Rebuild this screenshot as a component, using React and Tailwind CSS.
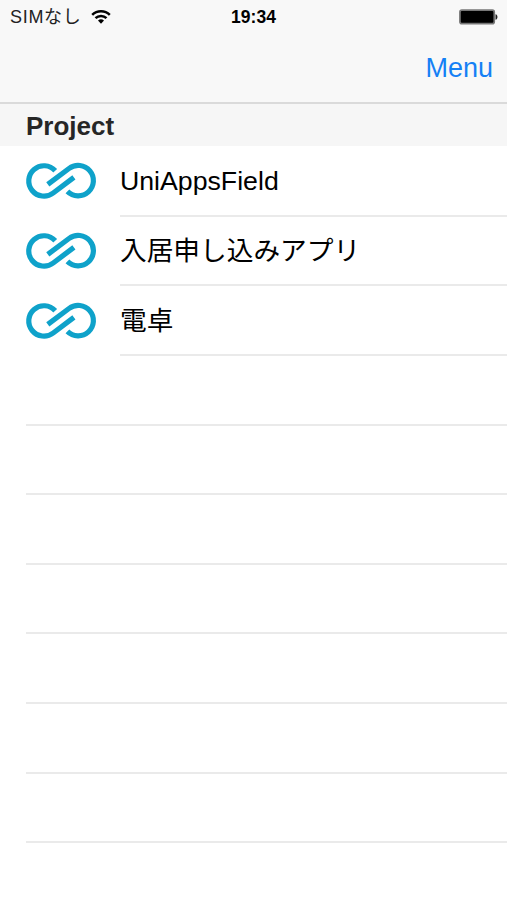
const PROJECTS = ['UniAppsField', '入居申し込みアプリ', '電卓']
const EMPTY_ROWS = 7

function WifiIcon() {
  return (
    <svg className="ml-[9px] h-[16px] w-[20px] shrink-0" viewBox="0 0 20 16" fill="none" stroke="#000" strokeWidth="2.5">
      <path d="M1.2 5.9a12.4 12.4 0 0 1 17.6 0" />
      <path d="M4.5 9.2a7.8 7.8 0 0 1 11 0" />
      <path d="M10 14.8l-3-3.2a4.4 4.4 0 0 1 6 0z" fill="#000" stroke="none" />
    </svg>
  )
}

function BatteryIcon() {
  return (
    <svg className="h-[16px] w-[40px]" viewBox="0 0 40 16">
      <rect x="0.7" y="0.9" width="34.8" height="14" rx="2.2" fill="#777" stroke="#777" strokeWidth="1.2" />
      <rect x="1.8" y="2" width="32.6" height="11.8" rx="1" fill="#000" />
      <path d="M36.5 5.2c2.6.5 2.6 5 0 5.5z" fill="#222" />
    </svg>
  )
}

function LoopLogo() {
  return (
    <svg className="h-[38px] w-[72px] shrink-0" viewBox="0 0 72 38" fill="none" stroke="#0fa2ca" strokeWidth="5.2">
      <path d="M30.2 8.7A15.2 15.2 0 1 0 28.2 31L48.9 15.4" />
      <path d="M22.8 22.4L44 6.5A15.2 15.2 0 1 1 42.4 29.3" />
    </svg>
  )
}

function StatusBar() {
  return (
    <div className="grid h-[34px] grid-cols-3 items-center">
      <div className="flex items-center pl-[10px] text-[18px] text-[#222]">
        <span className="whitespace-nowrap tracking-[0.7px]">SIMなし</span>
        <WifiIcon />
      </div>
      <div className="pt-px text-center text-[17.5px] font-bold">19:34</div>
      <div className="flex justify-end pr-[8px]">
        <BatteryIcon />
      </div>
    </div>
  )
}

export default function App() {
  return (
    <div className="flex h-[900px] w-[507px] flex-col overflow-hidden bg-white font-['Liberation_Sans','Noto_Sans_CJK_JP',sans-serif] text-black">
      <header className="h-[104px] shrink-0 border-b-2 border-[#dadada] bg-[#f8f8f8]">
        <StatusBar />
        <div className="flex h-[68px] items-center justify-end pr-[14px]">
          <button className="text-[27px] text-[#1580f5]">Menu</button>
        </div>
      </header>

      <h2 className="flex h-[42px] shrink-0 items-center bg-[#f6f6f6] pt-[2px] pl-[26px] text-[26px] font-bold text-[#262626]">
        Project
      </h2>

      <ul className="pt-px">
        {PROJECTS.map((name) => (
          <li key={name} className="flex h-[69.65px] pl-[25px]">
            <div className="flex w-[95px] items-center pb-px">
              <LoopLogo />
            </div>
            <div className="flex flex-1 items-center border-b-2 border-[#eaeaea] pt-px text-[26.7px]">
              {name}
            </div>
          </li>
        ))}
        {Array.from({ length: EMPTY_ROWS }, (_, i) => (
          <li key={i} className="ml-[26px] h-[69.65px] border-b-2 border-[#eaeaea]" />
        ))}
      </ul>
    </div>
  )
}
